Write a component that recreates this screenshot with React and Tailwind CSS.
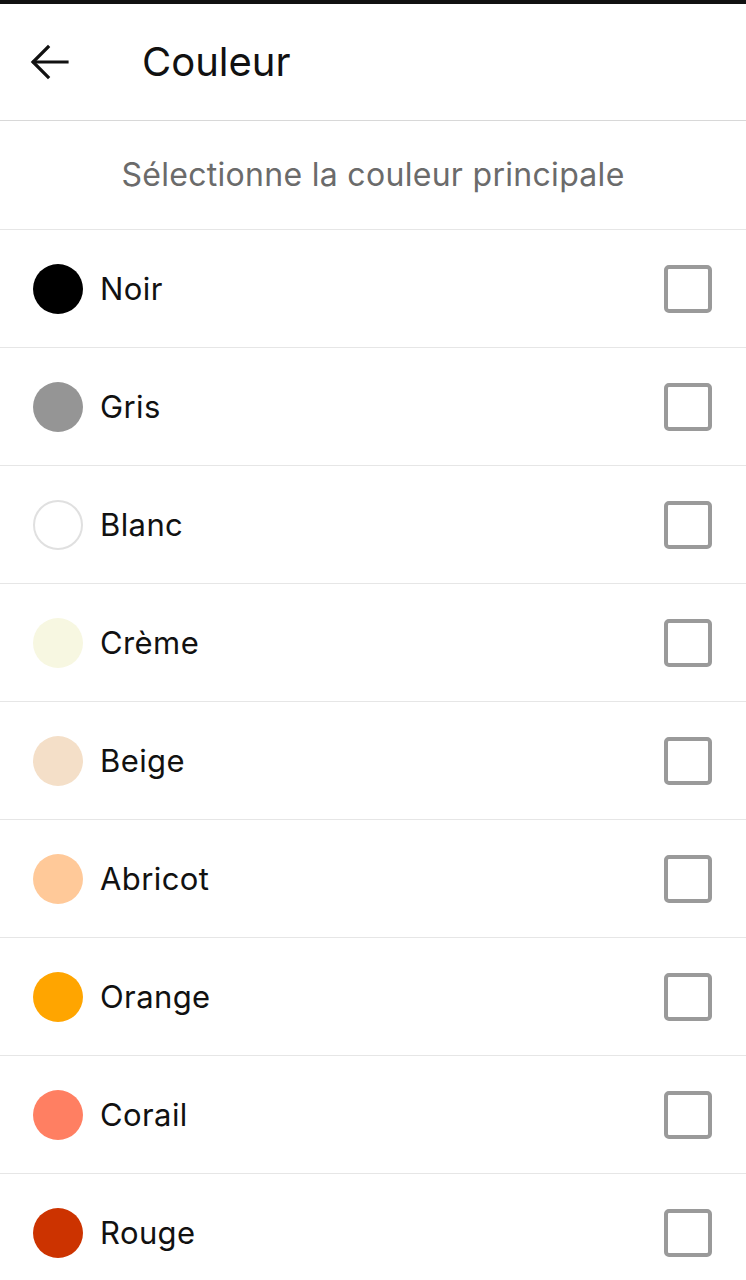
import React from "react";

const colors = [
  { name: "Noir", c: "bg-[#000000]" },
  { name: "Gris", c: "bg-[#959595]" },
  { name: "Blanc", c: "bg-white border-2 border-[#e0e0e0]" },
  { name: "Crème", c: "bg-[#f7f7e1]" },
  { name: "Beige", c: "bg-[#f4dfc8]" },
  { name: "Abricot", c: "bg-[#ffc999]" },
  { name: "Orange", c: "bg-[#ffa500]" },
  { name: "Corail", c: "bg-[#ff7f62]" },
  { name: "Rouge", c: "bg-[#cc3300]" },
];

export default function App() {
  return (
    <div className="w-[746px] h-[1280px] overflow-hidden bg-white font-['Inter',sans-serif]">
      <div className="h-[4px] bg-[#111111]" />
      <div className="h-[117px] flex items-center border-b border-[#d8d8d8]">
        <div className="w-[142px] pl-[30px] flex items-center">
          <svg width="40" height="38" viewBox="0 0 40 38" fill="none" stroke="#111" strokeWidth="3.2" strokeLinecap="square">
            <path d="M4 19 H37" />
            <path d="M18 4 L3 19 L18 34" strokeLinejoin="miter" />
          </svg>
        </div>
        <div className="text-[40px] leading-none text-[#111111] font-normal">Couleur</div>
      </div>
      <div className="h-[109px] flex items-center justify-center border-b border-[#e6e6e6]">
        <div className="text-[32px] tracking-[0.3px] text-[#6b6b6b] leading-none">Sélectionne la couleur principale</div>
      </div>
      {colors.map((item) => (
        <div key={item.name} className="h-[118px] flex items-center border-b border-[#e6e6e6] pl-[33px] pr-[34px]">
          <div className={`w-[50px] h-[50px] rounded-full shrink-0 ${item.c}`} />
          <div className="ml-[17px] text-[31px] tracking-[0.4px] leading-none text-[#111111] flex-1">{item.name}</div>
          <div className="w-[48px] h-[48px] rounded-[5px] border-[4px] border-[#9a9a9a] bg-white" />
        </div>
      ))}
    </div>
  );
}
